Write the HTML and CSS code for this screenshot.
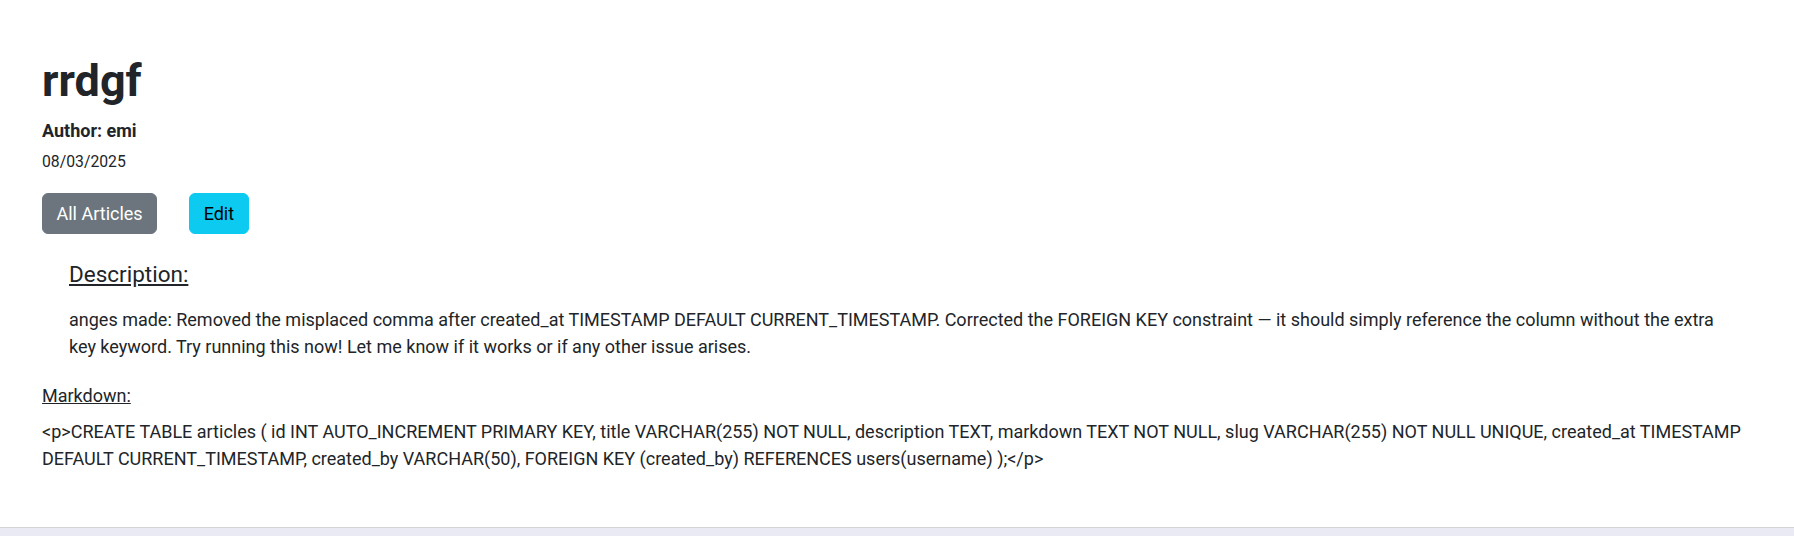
FILE: index.html
```html
<!DOCTYPE html>
<html lang="en">
<head>
<meta charset="utf-8">
<title>rrdgf</title>
<link rel="stylesheet" href="styles.css">
</head>
<body>
<main class="page">
  <h1 class="title">rrdgf</h1>
  <p class="author">Author: emi</p>
  <p class="date">08/03/2025</p>
  <div class="actions">
    <a class="btn btn-secondary" href="#">All Articles</a>
    <a class="btn btn-info" href="#">Edit</a>
  </div>
  <section class="desc">
    <h5 class="desc-heading">Description:</h5>
    <p class="desc-text">anges made: Removed the misplaced comma after created_at TIMESTAMP DEFAULT CURRENT_TIMESTAMP. Corrected the FOREIGN KEY constraint — it should simply reference the column without the extra key keyword. Try running this now! Let me know if it works or if any other issue arises.</p>
  </section>
  <p class="md-label">Markdown:</p>
  <p class="md-text">&lt;p&gt;CREATE TABLE articles ( id INT AUTO_INCREMENT PRIMARY KEY, title VARCHAR(255) NOT NULL, description TEXT, markdown TEXT NOT NULL, slug VARCHAR(255) NOT NULL UNIQUE, created_at TIMESTAMP DEFAULT CURRENT_TIMESTAMP, created_by VARCHAR(50), FOREIGN KEY (created_by) REFERENCES users(username) );&lt;/p&gt;</p>
</main>
<footer class="strip"></footer>
</body>
</html>
```
FILE: styles.css
```css
html, body {
  margin: 0;
  padding: 0;
}
body {
  background: #eaeaf4;
  font-family: Roboto, "Liberation Sans", sans-serif;
  font-size: 18px;
  line-height: 1.5;
  color: #212529;
}
.page {
  box-sizing: border-box;
  background: #ffffff;
  height: 528px;
  padding: 54px 42px 0 42px;
  border-bottom: 1px solid #d4d4d6;
}
.title {
  margin: 0 0 9px 0;
  font-size: 45px;
  line-height: 1.2;
  font-weight: 700;
}
.author {
  margin: 0;
  font-weight: 700;
}
.date {
  margin: 6px 0 0 0;
  font-size: 15.75px;
  line-height: 1.5;
}
.actions {
  margin-top: 19px;
  display: flex;
  gap: 32px;
}
.btn {
  display: inline-block;
  padding: 6px 13.5px;
  border: 1px solid transparent;
  border-radius: 6px;
  font-size: 18px;
  line-height: 27px;
  text-decoration: none;
}
.btn-secondary {
  background: #6c757d;
  border-color: #6c757d;
  color: #ffffff;
}
.btn-info {
  background: #0dcaf0;
  border-color: #0dcaf0;
  color: #000000;
}
.desc {
  margin: 27px 27px 0 27px;
}
.desc-heading {
  margin: 0 0 18px 0;
  font-size: 22.5px;
  line-height: 27px;
  font-weight: 400;
  text-decoration: underline;
}
.desc-text {
  margin: 0;
}
.md-label {
  margin: 22.5px 0 9px 0;
  text-decoration: underline;
}
.md-text {
  margin: 0;
}
.strip {
  height: 8px;
}
```
